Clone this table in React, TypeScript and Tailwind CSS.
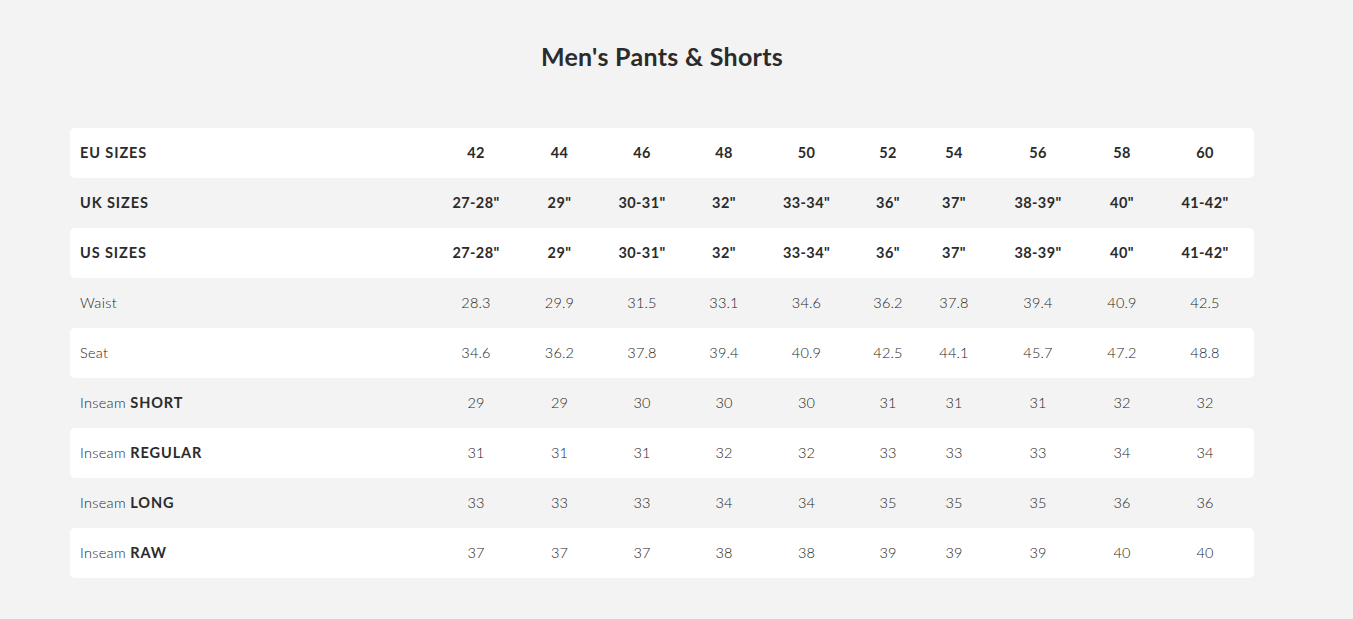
const cols = ["42", "44", "46", "48", "50", "52", "54", "56", "58", "60"];
const uk = ['27-28"', '29"', '30-31"', '32"', '33-34"', '36"', '37"', '38-39"', '40"', '41-42"'];

// small nudges so the figures line up with the original chart
const nudge = ["", "", "", "", "", "", "pr-4", "", "", ""];

type Row = {
  label: string;
  bold?: string;
  head?: boolean;
  values: string[];
};

const rows: Row[] = [
  { label: "EU SIZES", head: true, values: cols },
  { label: "UK SIZES", head: true, values: uk },
  { label: "US SIZES", head: true, values: uk },
  { label: "Waist", values: ["28.3", "29.9", "31.5", "33.1", "34.6", "36.2", "37.8", "39.4", "40.9", "42.5"] },
  { label: "Seat", values: ["34.6", "36.2", "37.8", "39.4", "40.9", "42.5", "44.1", "45.7", "47.2", "48.8"] },
  { label: "Inseam", bold: "SHORT", values: ["29", "29", "30", "30", "30", "31", "31", "31", "32", "32"] },
  { label: "Inseam", bold: "REGULAR", values: ["31", "31", "31", "32", "32", "33", "33", "33", "34", "34"] },
  { label: "Inseam", bold: "LONG", values: ["33", "33", "33", "34", "34", "35", "35", "35", "36", "36"] },
  { label: "Inseam", bold: "RAW", values: ["37", "37", "37", "38", "38", "39", "39", "39", "40", "40"] },
];

function SizeRow({ row, index }: { row: Row; index: number }) {
  const white = index % 2 === 0;
  return (
    <div
      className={`grid grid-cols-[364px_84px_83px_82px_82px_83px_80px_68px_84px_84px_82px] h-[50px] items-center pr-2 rounded-[5px] ${
        white ? "bg-white" : "bg-transparent"
      }`}
    >
      <div className="pl-[10px] text-[14.5px]">
        {row.head ? (
          <span className="font-bold tracking-[0.9px]">{row.label}</span>
        ) : (
          <>
            <span className="font-light text-[#1e1e1e] tracking-[0.3px]">{row.label}</span>
            {row.bold && <span className="font-bold tracking-[0.9px]"> {row.bold}</span>}
          </>
        )}
      </div>
      {row.values.map((v, i) => (
        <div
          key={i}
          className={`text-center text-[14.5px] ${nudge[i]} ${
            row.head ? "font-bold tracking-[0.4px]" : "font-light text-[#1e1e1e] tracking-[0.2px]"
          }`}
        >
          {v}
        </div>
      ))}
    </div>
  );
}

export default function App() {
  return (
    <div className="min-h-[619px] bg-[#f3f3f3] text-[#2b2b2b] font-['Lato','Liberation_Sans',sans-serif]">
      <div className="mx-[70px] w-[1184px]">
        <h1 className="pt-[40px] text-center text-[25px] font-bold tracking-[0.3px] leading-[32px]">
          Men's Pants &amp; Shorts
        </h1>
        <div className="mt-[56px] flex flex-col">
          {rows.map((r, i) => (
            <SizeRow key={i} row={r} index={i} />
          ))}
        </div>
      </div>
    </div>
  );
}
